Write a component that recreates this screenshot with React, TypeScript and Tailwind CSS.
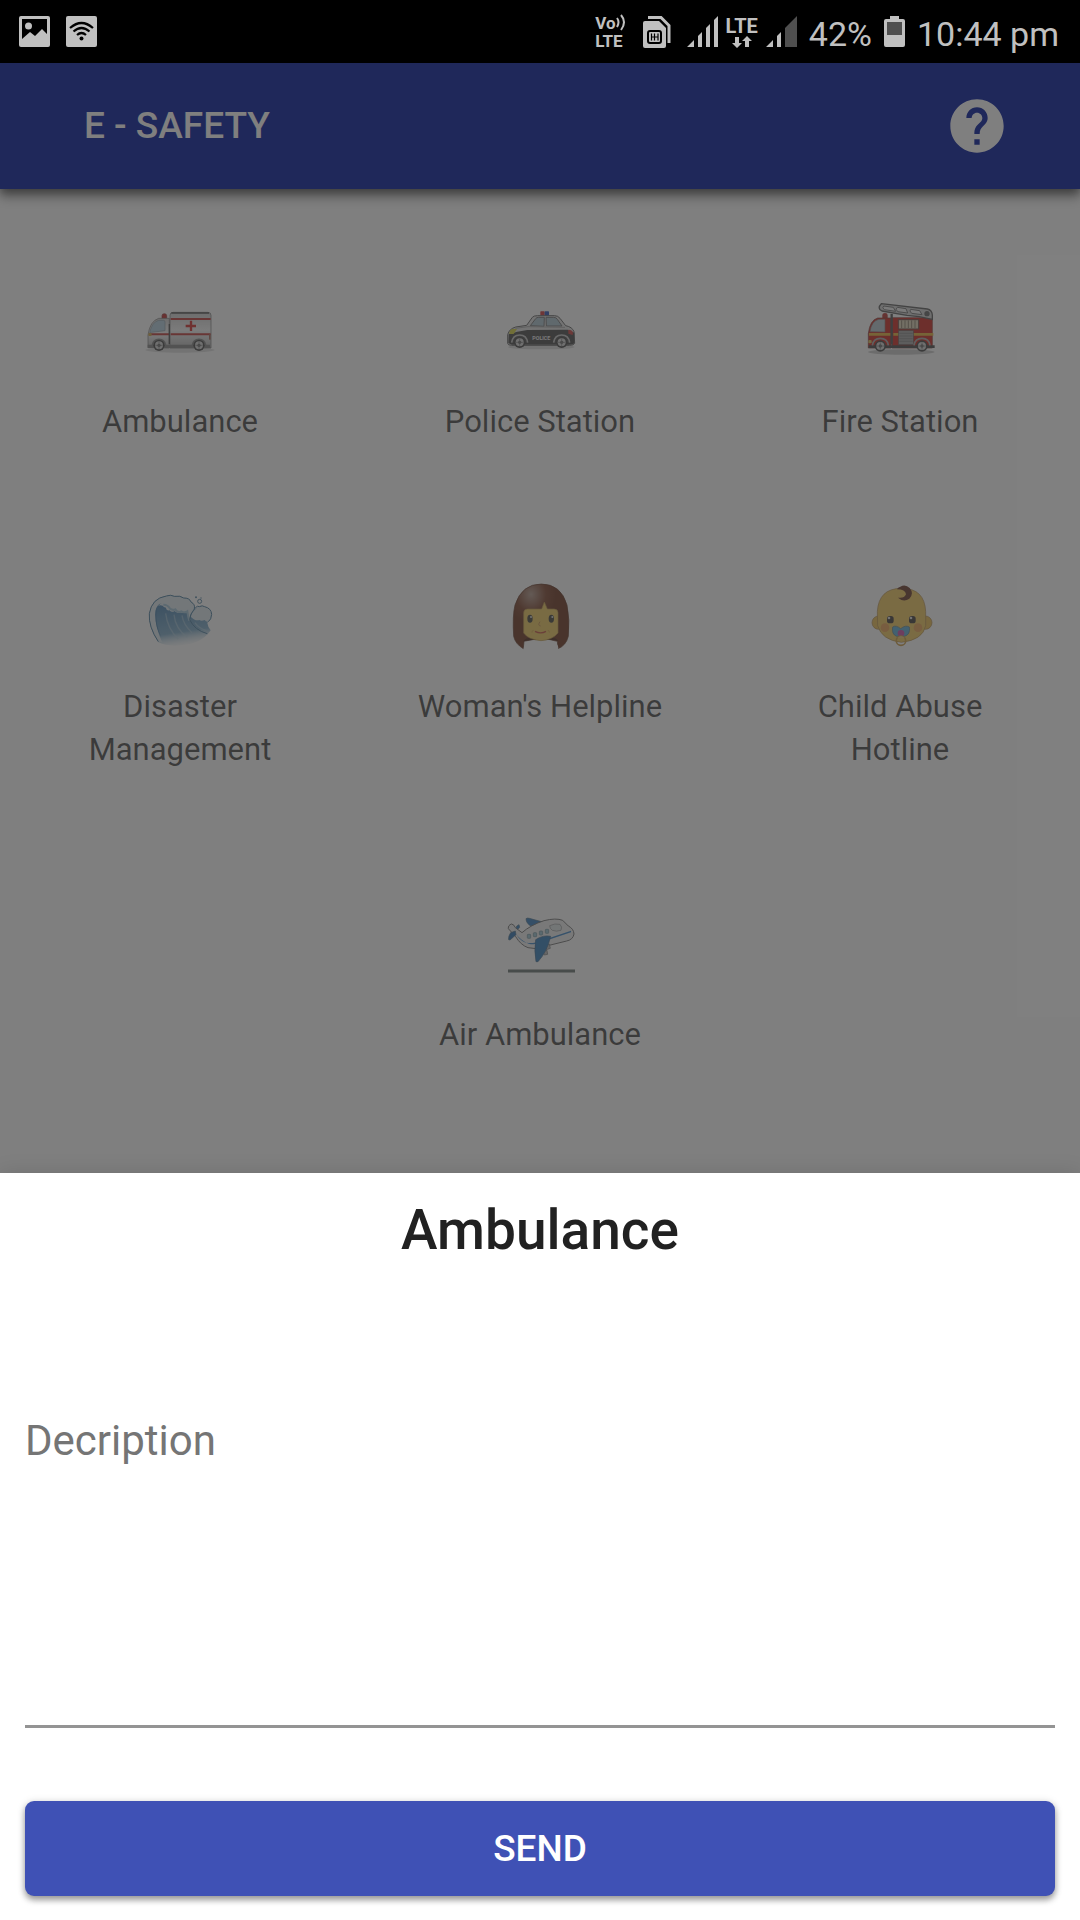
import React from "react";
import { MdHelp } from "react-icons/md";

const iconBox = "h-[68px] w-[68px] overflow-visible opacity-75";

function Wheel({ cx, cy }: { cx: number; cy: number }) {
  return (
    <g>
      <circle cx={cx} cy={cy} r="17" fill="#4a4a4a" />
      <circle cx={cx} cy={cy} r="12" fill="#d5d5d5" />
      <circle cx={cx} cy={cy} r="5" fill="#6a6a6a" />
      <path d={`M${cx - 11} ${cy}h22M${cx} ${cy - 11}v22`} stroke="#777" strokeWidth="2" />
    </g>
  );
}

function AmbulanceIcon() {
  return (
    <svg className={iconBox} viewBox="198 54 204 204" aria-hidden="true">
      <defs>
        <linearGradient id="amb" x1="0" y1="0" x2="0" y2="1">
          <stop offset="0" stopColor="#cfcfcf" />
          <stop offset="0.5" stopColor="#f4f4f4" />
          <stop offset="1" stopColor="#b4b4b4" />
        </linearGradient>
      </defs>
      <ellipse cx="300" cy="210" rx="104" ry="8" fill="#000" opacity=".12" />
      <path d="M246 116v-9q0-6 7-6t7 6v9z" fill="#c4302f" stroke="#8e3030" strokeWidth="2" />
      <path d="M204 203v-38q6-42 32-50h32v89z" fill="url(#amb)" stroke="#777" strokeWidth="2" />
      <path d="M209 158q7-32 27-37h15q4 0 4 5v26l-40 5z" fill="#b4cfdf" stroke="#8c9ca5" strokeWidth="2" />
      <path d="M270 106q0-9 9-9h105q9 0 9 9v98H270z" fill="url(#amb)" stroke="#707070" strokeWidth="2" />
      <path d="M274 99h113" stroke="#555" strokeWidth="4" />
      <path d="M272 117h120M207 163h61M272 163h120" stroke="#c13c39" strokeWidth="6" />
      <path d="M333 122v31M317 138h31" stroke="#d42f2c" strokeWidth="7" />
      <path d="M268 132v60" stroke="#555" strokeWidth="4" />
      <rect x="205" y="159" width="10" height="9" rx="3" fill="#d1a94d" />
      <rect x="387" y="162" width="5" height="17" fill="#a8695b" />
      <path d="M203 194h187v10H203z" fill="#888" />
      <path d="M217 196q3-18 20-18t20 18M337 196q3-18 20-18t20 18" fill="none" stroke="#888" strokeWidth="5" />
      <Wheel cx={237} cy={196} />
      <Wheel cx={357} cy={196} />
    </svg>
  );
}

function PoliceIcon() {
  return (
    <svg className={iconBox} viewBox="258 54 204 204" aria-hidden="true">
      <ellipse cx="364" cy="201" rx="100" ry="7" fill="#000" opacity=".14" />
      <rect x="361" y="94" width="13" height="13" rx="2" fill="#d23b3b" />
      <rect x="374" y="94" width="13" height="13" rx="2" fill="#3258bd" />
      <path d="M263 190v-26q4-17 24-23l33-5 17-24q4-5 15-5h52q10 0 16 8l17 22q20 4 25 18l2 35q-3 6-15 6H275q-12 0-12-6z" fill="#dedede" stroke="#666" strokeWidth="3" />
      <path d="M331 137l16-21q3-4 9-4h17l-1 27zM378 112h23q7 0 11 6l14 20h-47z" fill="#adc4d0" stroke="#777" strokeWidth="3" />
      <path d="M266 163q24-9 56-13l121-1 20 9v31q-3 5-15 5H275l-10-5z" fill="#4b4b4b" />
      <path d="M286 145l38-5 111 2" fill="none" stroke="#aaa" strokeWidth="3" />
      <path d="M268 162q0-12 8-15h15l-10 15z" fill="#d9d440" />
      <path d="M445 149q12 0 14 9l-1 7-13-4z" fill="#cc4441" />
      <path d="M275 188q3-23 24-23t24 23M401 188q3-23 24-23t24 23" fill="#555" stroke="#c4c4c4" strokeWidth="5" />
      <text x="364" y="179" textAnchor="middle" fontFamily="Roboto, sans-serif" fontSize="16" fontWeight="700" fill="#eee">POLICE</text>
      <Wheel cx={299} cy={187} />
      <Wheel cx={425} cy={187} />
    </svg>
  );
}

function FireIcon() {
  return (
    <svg className={iconBox} viewBox="198 54 204 204" aria-hidden="true">
      <ellipse cx="304" cy="216" rx="100" ry="8" fill="#000" opacity=".2" />
      <path d="M247 114v-9q0-6 8-6t8 6v9z" fill="#b93531" />
      <path d="M205 204v-44q5-40 28-46h40v90z" fill="#cf2a22" stroke="#7d3936" strokeWidth="2" />
      <path d="M210 155q4-31 26-37h19v38z" fill="#b6c7d0" stroke="#8c7777" strokeWidth="2" />
      <path d="M276 113h121v91H276z" fill="#cf2a22" stroke="#863d38" strokeWidth="2" />
      <path d="M275 102v92" stroke="#555" strokeWidth="7" />
      <path d="M244 71l138 16q14 3 15 18v13l-40-8-36-4-75-13q-16-8-2-22z" fill="#d2d2d2" stroke="#606060" strokeWidth="4" />
      <path d="M251 78l29 4 7 12-34-5q-8-6-2-11zM292 82l26 4 5 13-30-4q-9-8-1-13zM332 88l27 4 7 12-31-4q-9-8-3-12z" fill="#f2f2f2" stroke="#777" strokeWidth="3" />
      <circle cx="381" cy="101" r="8" fill="#666" />
      <rect x="295" y="119" width="61" height="28" fill="#ded3b8" stroke="#6f4d49" strokeWidth="3" />
      <path d="M305 121v24M315 121v24M325 121v24M335 121v24M345 121v24" stroke="#8f836e" strokeWidth="3" />
      <path d="M207 163h64M280 163h120" stroke="#e6b53f" strokeWidth="8" />
      <rect x="296" y="152" width="44" height="42" fill="#a5a5a5" stroke="#666" strokeWidth="2" />
      <path d="M298 160h40M298 168h40M298 176h40M298 184h40" stroke="#7b7b7b" strokeWidth="2" />
      <path d="M206 196h198v8H206z" fill="#4d4d4d" />
      <path d="M217 196q3-21 24-21t24 21M342 196q3-21 24-21t24 21" fill="none" stroke="#aaa" strokeWidth="5" />
      <rect x="205" y="180" width="10" height="10" rx="3" fill="#ddc25b" />
      <Wheel cx={241} cy={198} />
      <Wheel cx={366} cy={198} />
    </svg>
  );
}

function WaveIcon() {
  return (
    <svg className={iconBox} viewBox="198 39 204 204" aria-hidden="true">
      <defs>
        <linearGradient id="sea" gradientUnits="userSpaceOnUse" x1="290" y1="100" x2="310" y2="232">
          <stop offset="0" stopColor="#4f86b3" />
          <stop offset="0.65" stopColor="#7eabc9" />
          <stop offset="1" stopColor="#d8e6ee" stopOpacity="0" />
        </linearGradient>
      </defs>
      <path d="M235 217q-30-45-27-86 7-46 51-53 13-5 24 1 18-3 28 5 17-1 23 13 10 8 10 20 12-10 26-8 20 12 22 30-4 14-10 20 2 14 10 22-30 46-108 46-28 0-49-10z" fill="url(#sea)" />
      <path d="M235 215q-30-45-27-84 7-46 51-53 13-5 24 1 18-3 28 5 17-1 23 13 12 7 9 22-8 8-12 18l-4 14q-4-12-5-25-14 6-22 0-8 6-16-3-9 6-15-2-10 2-11-8-8-1-10-6-10-3-15 2-8 8-7 26 2 42 20 81z" fill="#dfeaf0" />
      <path d="M230 118q-5 44 14 84-19-30-18-68 2-34 20-34-13 4-16 18z" fill="#4b80aa" />
      <path d="M250 104q14 0 20 12 8 6 16 2 8 12 18 6 10 6 18 0 2 16 6 28" fill="none" stroke="#a4c6da" strokeWidth="6" />
      <path d="M332 140q3-14 14-22l9-9q10-5 18 1 20 5 22 25 0 14-9 20-8 2-12-5-10 5-16 0-12 4-26-10z" fill="#dfeaf0" />
      <path d="M235 215q-30-45-27-84 7-46 51-53 13-5 24 1 18-3 28 5 17-1 23 13 12 5 9 20-14 16-14 32 15 32 53 42M346 113q7-7 12-3 9-5 16 0 20 5 21 23-1 16-10 22" fill="none" stroke="#4f7f9f" strokeWidth="3" />
      <path d="M257 130q5 45 38 78M282 134q4 42 40 68M306 136q4 28 30 52M345 158q10 16 34 24" fill="none" stroke="#b4d0df" strokeWidth="4" opacity=".55" />
      <circle cx="359" cy="94" r="6" fill="none" stroke="#5d89a6" strokeWidth="3" />
      <circle cx="348" cy="82" r="3" fill="#5d89a6" />
      <circle cx="363" cy="84" r="2" fill="#5d89a6" />
    </svg>
  );
}

function WomanIcon() {
  return (
    <svg className={iconBox} viewBox="318 39 204 204" aria-hidden="true">
      <defs>
        <radialGradient id="hair" cx="0.32" cy="0.16" r="0.45">
          <stop offset="0" stopColor="#b69c8f" />
          <stop offset="0.6" stopColor="#7f4630" />
          <stop offset="1" stopColor="#6e3722" />
        </radialGradient>
      </defs>
      <path d="M370 236q-24-14-29-37-4-62 4-94 20-63 79-63t77 63q9 44 4 94-7 28-31 37l-2-22q-48-14-100 0z" fill="url(#hair)" stroke="#5c3322" strokeWidth="2" />
      <path d="M370 214q4-14 54-14t50 14q-8-6-50-5t-54 5z" fill="#4f2a1d" />
      <path d="M371 237q0-28 53-28t51 28z" fill="#fff" />
      <path d="M371 189v-61q0-11 12-11h42l8-21 9 21h20q12 0 12 11v61q-17 21-51 23-38-3-52-23z" fill="#f0c95f" stroke="#ba974c" strokeWidth="2" />
      <ellipse cx="390" cy="146" rx="8" ry="12" fill="#474840" />
      <ellipse cx="454" cy="146" rx="8" ry="12" fill="#474840" />
      <circle cx="393" cy="141" r="3" fill="#ddd" />
      <circle cx="457" cy="141" r="3" fill="#ddd" />
      <path d="M420 155q-8 12 2 13" fill="none" stroke="#c89654" strokeWidth="3" />
      <path d="M405 184q17 9 33 0" fill="none" stroke="#c85844" strokeWidth="4" />
      <path d="M396 188q-1-7 5-7M448 188q1-7-5-7" fill="none" stroke="#d4a048" strokeWidth="2" />
    </svg>
  );
}

function BabyIcon() {
  return (
    <svg className={iconBox} viewBox="198 39 204 204" aria-hidden="true">
      <circle cx="236" cy="158" r="20" fill="#ebbf55" stroke="#b18b4e" strokeWidth="2" />
      <circle cx="376" cy="158" r="20" fill="#ebbf55" stroke="#b18b4e" strokeWidth="2" />
      <path d="M232 125q4-70 73-70t72 70v42q-8 43-73 50-59-7-71-50z" fill="#f2ca60" stroke="#b18b4e" strokeWidth="2" />
      <path d="M301 50q15-9 28 4 14 17-1 32-17 12-34-3 19 3 24-10-2-15-27-15 2-6 10-8z" fill="#6b3b2d" />
      <circle cx="255" cy="173" r="13" fill="#e8854f" opacity=".55" />
      <circle cx="354" cy="173" r="13" fill="#e8854f" opacity=".55" />
      <rect x="261" y="138" width="20" height="22" rx="8" fill="#453f3b" />
      <rect x="327" y="138" width="20" height="22" rx="8" fill="#453f3b" />
      <circle cx="267" cy="144" r="4" fill="#ddd" />
      <circle cx="333" cy="144" r="4" fill="#ddd" />
      <path d="M302 176q-14-12-24-5-4 22 12 28h24q18-6 14-28-12-7-26 5z" fill="#5fafd6" stroke="#4c7b98" strokeWidth="2" />
      <circle cx="303" cy="190" r="10" fill="#cf52a8" />
      <circle cx="303" cy="212" r="14" fill="none" stroke="#cfa04a" strokeWidth="5" />
      <path d="M292 204q11-12 22 0z" fill="#eccb7e" />
    </svg>
  );
}

function PlaneIcon() {
  return (
    <svg className={iconBox} viewBox="258 63 204 204" aria-hidden="true">
      <path d="M318 86q4-3 10-1l40 11-31 14q-19-8-19-24zM287 116q2-10 10-12l2 8-8 9z" fill="#3a80be" stroke="#506f87" strokeWidth="2" />
      <path d="M265 116q-1-11 10-14 8 2 11 11l20 15q26-23 66-36 36-9 56-1l17 17q16 8 17 24-3 17-22 21l-69 17q-25 10-47 3-22-8-37-33z" fill="#f0f0f0" stroke="#777" strokeWidth="3" />
      <path d="M287 131q18 28 39 28 26 0 46-10l81-27v5l-78 26q-26 14-49 8-21-8-39-30z" fill="#3f88c9" />
      <path d="M266 149q-2-9 6-21l14-5 2 11-18 16z" fill="#3175b3" stroke="#506f87" strokeWidth="2" />
      <path d="M389 107q16-8 31-4 8 8 3 18-14 5-26 0-8-5-8-14z" fill="#dfe6e8" stroke="#929292" strokeWidth="2" />
      <path d="M368 184l13-3 2 12-10 2zM377 165l11-3 3 13-12 4z" fill="#bbb" stroke="#777" strokeWidth="2" />
      <path d="M347 149q23-15 45-10-11 47-38 76h-6q-6-34-1-66z" fill="#357ebd" stroke="#426b8d" strokeWidth="2" />
      <g fill="#9cc5d4" stroke="#6f8f9a" strokeWidth="2">
        <rect x="322" y="133" width="10" height="12" rx="2" />
        <rect x="340" y="128" width="10" height="12" rx="2" />
        <rect x="358" y="123" width="10" height="12" rx="2" />
        <rect x="376" y="118" width="10" height="12" rx="2" />
      </g>
      <path d="M264 243h201" stroke="#6c7673" strokeWidth="9" />
    </svg>
  );
}

const services = [
  { label: "Ambulance", Icon: AmbulanceIcon, place: "" },
  { label: "Police Station", Icon: PoliceIcon, place: "" },
  { label: "Fire Station", Icon: FireIcon, place: "" },
  { label: "Disaster Management", Icon: WaveIcon, place: "" },
  { label: "Woman's Helpline", Icon: WomanIcon, place: "" },
  { label: "Child Abuse Hotline", Icon: BabyIcon, place: "" },
  { label: "Air Ambulance", Icon: PlaneIcon, place: "col-start-2" },
];

function StatusBar() {
  return (
    <div className="flex h-[63px] items-center justify-between bg-black pr-[21px] pl-[19px] text-[#c0c0c0]">
      <div className="flex items-center gap-4">
        <svg className="h-[31px] w-[31px]" viewBox="0 0 31 31" aria-hidden="true">
          <rect width="31" height="31" rx="2" fill="#c0c0c0" />
          <path d="M3 3h25v15l-5-5-7 7-5-4-8 7z" fill="#000" />
          <circle cx="9.500" cy="10" r="3.500" fill="#c0c0c0" />
        </svg>
        <svg className="h-[31px] w-[31px]" viewBox="0 0 31 31" aria-hidden="true">
          <rect width="31" height="31" rx="2" fill="#c0c0c0" />
          <g fill="none" stroke="#000" strokeWidth="2.200">
            <path d="M4 12q11.500-10 23 0M7.500 15.500q8-7 16 0M11 19q4.500-4 9 0" />
          </g>
          <circle cx="15.500" cy="22.500" r="2" fill="#000" />
        </svg>
      </div>
      <div className="flex items-center gap-3">
        <div className="mr-1 flex flex-col text-[17px] leading-[18px] font-bold">
          <span className="flex items-center">
            Vo
            <svg className="h-[17px] w-[11px]" viewBox="0 0 11 17" fill="none" stroke="#c0c0c0" strokeWidth="2" aria-hidden="true">
              <path d="M1 4q3 4 0 9M5 1q6 7 0 15" />
            </svg>
          </span>
          <span>LTE</span>
        </div>
        <svg className="mr-1 h-8 w-[28px]" viewBox="0 0 28 32" aria-hidden="true">
          <path d="M2 5h14l7 7v18q0 2-2 2H2q-2 0-2-2V7q0-2 2-2z" fill="#c0c0c0" />
          <path d="M5 1.500h13l8 8V27" fill="none" stroke="#c0c0c0" strokeWidth="3" />
          <rect x="5" y="15" width="13" height="12" rx="2" fill="none" stroke="#000" strokeWidth="2" />
          <path d="M8.500 17.500v7M11.500 17.500v7M15 17.500v7M8 21h7" stroke="#000" strokeWidth="1.200" />
        </svg>
        <div className="flex items-center gap-2">
          <svg className="h-[31px] w-[31px]" viewBox="0 0 31 31" fill="#c0c0c0" aria-hidden="true">
            <path d="M0 31l7-7v7zM11 31V20l4-4v15zM19 31V12l4-4v23zM27 31V4l4-4v31z" />
          </svg>
          <div className="flex flex-col items-center text-[20px] leading-5 font-bold">
            <span>LTE</span>
            <svg className="h-3 w-5" viewBox="0 0 20 12" fill="#c0c0c0" aria-hidden="true">
              <path d="M3 1h4v6h3l-5 5-5-5h3zM13 11h4V5h3l-5-5-5 5h3z" />
            </svg>
          </div>
          <svg className="h-[31px] w-[31px]" viewBox="0 0 31 31" fill="#c0c0c0" aria-hidden="true">
            <path d="M0 31l7-7v7zM11 31V20l4-4v15z" />
            <path d="M19 31V12L31 0v31z" fill="#4f4f4f" />
          </svg>
        </div>
        <span className="pt-1 text-[34px] leading-10">42%</span>
        <svg className="h-[31px] w-[21px]" viewBox="0 0 21 31" aria-hidden="true">
          <path d="M6 0h9v3h4q2 0 2 2v24q0 2-2 2H2q-2 0-2-2V5q0-2 2-2h4z" fill="#c0c0c0" />
          <path d="M3 6h15v13H3z" fill="#4f4f4f" />
        </svg>
        <span className="pt-1 text-[34px] leading-10">10:44 pm</span>
      </div>
    </div>
  );
}

export default function App() {
  return (
    <div className="flex min-h-screen flex-col bg-white font-['Roboto',sans-serif]">
      <StatusBar />
      <div className="relative flex flex-1 flex-col">
        <header className="flex h-[126px] items-center justify-between bg-[#3f51b5] pr-[71px] pl-[84px] text-white shadow-[0_4px_9px_rgba(0,0,0,0.4),0_9px_12px_rgba(0,0,0,0.22)]">
          <h1 className="text-[37px] leading-[44px] font-medium">E - SAFETY</h1>
          <button type="button" aria-label="Help">
            <MdHelp className="h-16 w-16" />
          </button>
        </header>
        <main className="grid grid-cols-3 items-start gap-y-[140px] pt-[109px] pb-[100px]">
          {services.map(({ label, Icon, place }) => (
            <button
              key={label}
              type="button"
              className={`${place} flex flex-col items-center gap-[34px] px-12 text-center text-[31px] leading-[43px] text-black/54`}
            >
              <Icon />
              <span>{label}</span>
            </button>
          ))}
        </main>
        <div className="absolute inset-0 bg-black/50" />
      </div>
      <form
        aria-labelledby="sheet-title"
        className="relative flex flex-col bg-white px-[25px] pt-6 pb-6 shadow-[0_0_20px_rgba(0,0,0,0.12)]"
        onSubmit={(e) => e.preventDefault()}
      >
        <h2 id="sheet-title" className="text-center text-[55px] leading-[66px] font-medium text-[#212121]">
          Ambulance
        </h2>
        <textarea
          aria-label="Decription"
          placeholder="Decription"
          rows={5}
          className="mt-[150px] block w-full resize-none border-b-[3px] border-[#949494] bg-transparent pb-8 text-[42px] leading-[56px] text-[#212121] outline-none placeholder:text-[#757575]"
        />
        <button
          type="submit"
          className="mt-[73px] h-[95px] rounded-[9px] bg-[#3f51b5] text-[37px] leading-[44px] font-medium text-white shadow-[0_4px_6px_rgba(0,0,0,0.35),0_1px_8px_rgba(0,0,0,0.15)]"
        >
          SEND
        </button>
      </form>
    </div>
  );
}
